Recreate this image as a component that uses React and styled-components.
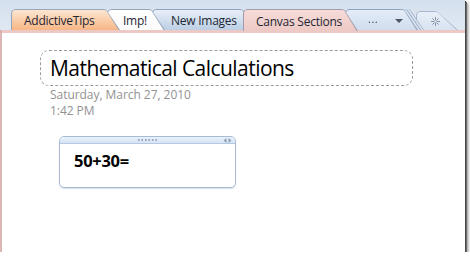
import React from "react";
import styled, { createGlobalStyle } from "styled-components";

const Global = createGlobalStyle`
  html, body { margin: 0; padding: 0; background: #fff; }
  body { font-family: "Open Sans", "Noto Sans", sans-serif; }
  * { box-sizing: border-box; }
`;

const Frame = styled.div`
  width: 465px;
  height: 252px;
  display: flex;
  flex-direction: column;
  background: #fff;
  box-shadow: 1px 1px 0 #4a4a4a, 2px 2px 0 #6a6a6a, 3px 3px 3px rgba(0, 0, 0, 0.45);
`;

const TabBar = styled.div`
  height: 30px;
  flex: none;
  display: flex;
  align-items: flex-end;
  padding-left: 11px;
  background: linear-gradient(#d5e0ee, #dfe8f2);
`;

/* outer shape = border colour; face inset by 1px */
const shape = (w, h, s) =>
  `polygon(0 ${h}px, 0 4px, 1px 1.5px, 4px 0, ${w - s - 3}px 0, ${w - s - 0.5}px 1px, ${w}px ${h}px)`;
const faceShape = (w, h, s) => {
  const fw = w - 1;
  const fh = h - 1;
  const k = s / h;
  const topR = w - s - 2.4 + k;
  const botR = fw - 1.4;
  return `polygon(0 ${fh}px, 0 3px, 0.8px 0.8px, 3px 0, ${topR - 2.5}px 0, ${topR}px 0.5px, ${botR}px ${fh}px)`;
};

const Tab = styled.div`
  position: relative;
  z-index: ${(p) => p.$z};
  flex: none;
  width: ${(p) => p.$w}px;
  height: ${(p) => p.$h}px;
  margin-left: ${(p) => p.$ml}px;
  margin-bottom: ${(p) => (p.$active ? -1 : 0)}px;
  padding: 1px 0 0 1px;
  display: flex;
  background: ${(p) => p.$bd};
  clip-path: ${(p) => shape(p.$w, p.$h, p.$s)};
`;

const Face = styled.div`
  flex: 1;
  display: flex;
  align-items: center;
  padding-left: ${(p) => p.$pl}px;
  background: ${(p) => p.$bg};
  clip-path: ${(p) => faceShape(p.$w, p.$h, p.$s)};
  font-size: 12px;
  letter-spacing: -0.25px;
  color: #1e2533;
  white-space: nowrap;
`;

const StackWrap = styled.div`
  position: relative;
  z-index: ${(p) => p.$z};
  flex: none;
  display: flex;
  margin-left: ${(p) => p.$ml}px;
  filter: drop-shadow(2px 0 0 #dbe5f1) drop-shadow(1px 0 0 #93a6c1) drop-shadow(2px 0 0 #dbe5f1)
    drop-shadow(1px 0 0 #a3b4cb);
`;

const Label = styled.span`
  margin-top: 1px;
`;

const Ellipsis = styled.span`
  font-size: 11px;
  color: #3a4150;
  letter-spacing: 0.5px;
  margin-top: -3px;
`;

const Caret = styled.span`
  margin-left: 17px;
  margin-top: 1px;
  width: 0;
  height: 0;
  border-left: 4.5px solid transparent;
  border-right: 4.5px solid transparent;
  border-top: 4px solid #4e5563;
`;

const Sparkle = () => (
  <svg width="9" height="9" viewBox="0 0 9 9">
    <g stroke="#8592a6" strokeWidth="1" strokeLinecap="round">
      <line x1="4.5" y1="0.5" x2="4.5" y2="3" />
      <line x1="4.5" y1="6" x2="4.5" y2="8.5" />
      <line x1="0.5" y1="4.5" x2="3" y2="4.5" />
      <line x1="6" y1="4.5" x2="8.5" y2="4.5" />
      <line x1="1.7" y1="1.7" x2="3.2" y2="3.2" />
      <line x1="5.8" y1="5.8" x2="7.3" y2="7.3" />
      <line x1="7.3" y1="1.7" x2="5.8" y2="3.2" />
      <line x1="3.2" y1="5.8" x2="1.7" y2="7.3" />
    </g>
  </svg>
);

const Band = styled.div`
  height: 3px;
  flex: none;
  background: #ecc9c5;
  border-left: 2px solid #d6b1ae;
`;

const Page = styled.div`
  flex: 1;
  background: #fff;
  border-left: 2px solid #dab7b5;
  padding: 17px 0 0 38px;
  display: flex;
  flex-direction: column;
  align-items: flex-start;
`;

const TitleBox = styled.div`
  width: 373px;
  height: 36px;
  border: 1px dashed #9c9c9c;
  border-radius: 9px;
  padding-left: 9px;
  display: flex;
  align-items: center;
`;

const Title = styled.h1`
  margin: 1px 0 0;
  font-family: "Open Sans", sans-serif;
  font-weight: 400;
  font-size: 21px;
  letter-spacing: -0.55px;
  color: #000;
  line-height: 1;
`;

const Meta = styled.div`
  margin: 1px 0 0 10px;
  font-size: 12px;
  line-height: 16px;
  color: #929292;
  letter-spacing: -0.05px;
`;

const Note = styled.div`
  margin: 17px 0 0 19px;
  width: 177px;
  height: 52px;
  border: 1px solid #a8bbd4;
  border-radius: 5px;
  overflow: hidden;
  display: flex;
  flex-direction: column;
  box-shadow: 0 1px 1px rgba(150, 170, 200, 0.35);
`;

const NoteHeader = styled.div`
  height: 7px;
  flex: none;
  background: linear-gradient(#e9f1fb, #d6e4f5);
  border-bottom: 1px solid #b6c9e1;
  position: relative;
  display: flex;
  justify-content: center;
  align-items: center;
`;

const Grip = styled.div`
  width: 21px;
  height: 2px;
  background: radial-gradient(circle, #9aabc2 0.8px, transparent 1px) 0 0 / 3.5px 2px repeat-x;
`;

const Arrows = styled.svg`
  position: absolute;
  right: 3px;
  top: 1px;
`;

const NoteBody = styled.div`
  flex: 1;
  padding: 5px 0 0 14px;
  font-family: "Open Sans", sans-serif;
  font-weight: 700;
  font-size: 16.5px;
  letter-spacing: -0.3px;
  color: #000;
`;

const S = 13;

const tabs = [
  { key: "a", z: 6, w: 109, h: 21, ml: 0, pl: 12, bd: "#98a6ba", bg: "linear-gradient(#fde6d1, #f7b684)", label: "AddictiveTips" },
  { key: "b", z: 5, w: 58, h: 21, ml: -S, pl: 15, bd: "#98a6ba", bg: "linear-gradient(#ffffff, #fbfbfb)", label: "Imp!" },
  { key: "c", z: 4, w: 104, h: 21, ml: -S, pl: 18, bd: "#8fa3bf", bg: "linear-gradient(#e8eff8, #bccfe5)", label: "New Images" },
  { key: "d", z: 10, w: 115, h: 22, ml: -S, pl: 12, bd: "#a59cab", bg: "linear-gradient(#f6dcd9, #edc9c5)", label: "Canvas Sections", active: true },
];

export default function App() {
  return (
    <>
      <Global />
      <Frame>
        <TabBar>
          {tabs.map((t) => (
            <Tab key={t.key} $z={t.z} $w={t.w} $h={t.h} $s={S} $ml={t.ml} $bd={t.bd} $active={t.active}>
              <Face $w={t.w} $h={t.h} $s={S} $pl={t.pl} $bg={t.bg}>
                <Label>{t.label}</Label>
              </Face>
            </Tab>
          ))}
          <StackWrap $z={3} $ml={-S}>
            <Tab $z={1} $w={73} $h={21} $s={S} $ml={0} $bd="#8fa3bf">
              <Face $w={73} $h={21} $s={S} $pl={22} $bg="linear-gradient(#e4ecf7, #d0ddee)">
                <Ellipsis>...</Ellipsis>
                <Caret />
              </Face>
            </Tab>
          </StackWrap>
          <Tab $z={2} $w={42} $h={19} $s={20} $ml={-2} $bd="#a7b7cd">
            <Face $w={42} $h={19} $s={20} $pl={14} $bg="linear-gradient(#e8eff8, #d7e3f0)">
              <Sparkle />
            </Face>
          </Tab>
        </TabBar>
        <Band />
        <Page>
          <TitleBox>
            <Title>Mathematical Calculations</Title>
          </TitleBox>
          <Meta>
            Saturday, March 27, 2010
            <br />
            1:42 PM
          </Meta>
          <Note>
            <NoteHeader>
              <Grip />
              <Arrows width="9" height="5" viewBox="0 0 9 5">
                <path d="M3.5 0 L0.5 2.5 L3.5 5 Z" fill="#8e9fb7" />
                <path d="M5.5 0 L8.5 2.5 L5.5 5 Z" fill="#8e9fb7" />
              </Arrows>
            </NoteHeader>
            <NoteBody>50+30=</NoteBody>
          </Note>
        </Page>
      </Frame>
    </>
  );
}
